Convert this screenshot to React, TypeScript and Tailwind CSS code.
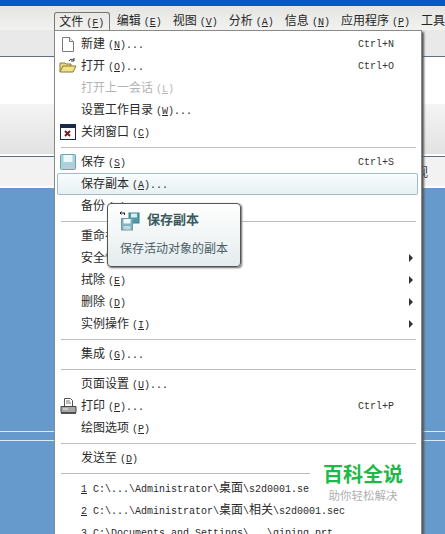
import React from 'react';

const cjk = "font-['Liberation_Mono','Noto_Sans_CJK_SC',monospace]";

const menubar = ['编辑(E)', '视图(V)', '分析(A)', '信息(N)', '应用程序(P)', '工具'];

// CJK runs at 12px, latin at 10px (half width), mnemonic letter underlined
const Txt = ({ text }: { text: string }) => (
  <>
    {text
      .split(/([\u4e00-\u9fff]+)/)
      .filter(Boolean)
      .map((part, i) => {
        if (/[\u4e00-\u9fff]/.test(part)) {
          return (
            <span key={i} className="text-[12px]">
              {part}
            </span>
          );
        }
        const m = part.match(/^\((.)\)(.*)$/);
        if (m) {
          return (
            <span key={i} className="ml-[3px] text-[10px]">
              (<span className="underline">{m[1]}</span>){m[2]}
            </span>
          );
        }
        return (
          <span key={i} className="text-[10px]">
            {part}
          </span>
        );
      })}
  </>
);

const NewIcon = () => (
  <svg width="16" height="17" viewBox="0 0 16 17">
    <path d="M2.500 1.500h7l4 4v10h-11z" fill="#fff" stroke="#7a7a7a" />
    <path d="M9.500 1.500v4h4" fill="#eee" stroke="#7a7a7a" />
  </svg>
);

const OpenIcon = () => (
  <svg width="18" height="16" viewBox="0 0 18 16">
    <path d="M1 14V5h5l1 1h5v2" fill="#e8d98a" stroke="#8a7a30" />
    <path d="M1 14l3-6h13l-3 6z" fill="#f3e28a" stroke="#8a7a30" />
    <path d="M10 3c1-2 3-2 5-1M15 0v3h-3" fill="none" stroke="#333" />
  </svg>
);

const CloseIcon = () => (
  <svg width="16" height="16" viewBox="0 0 16 16">
    <rect x="0.500" y="0.500" width="15" height="15" fill="#fff" stroke="#1c2a4a" />
    <rect x="1" y="1" width="14" height="3" fill="#1c2a4a" />
    <path d="M5 7l5 5M10 7l-5 5" stroke="#7a1c28" strokeWidth="2" />
  </svg>
);

const SaveIcon = () => (
  <svg width="16" height="16" viewBox="0 0 16 16">
    <rect x="0.500" y="0.500" width="15" height="15" rx="1" fill="#a5d3dc" stroke="#6ea4b2" />
    <rect x="3.500" y="1" width="9" height="7" fill="#eef8fa" />
    <rect x="3" y="11" width="10" height="4" fill="#b9cdd2" />
  </svg>
);

const PrintIcon = () => (
  <svg width="17" height="18" viewBox="0 0 17 18">
    <path d="M4.500 1.500h6l2 2v6h-8z" fill="#fff" stroke="#555" />
    <path d="M6 4h4M6 6h5" stroke="#777" />
    <path d="M1 9.500h15v6H1z" fill="#a8a8a8" stroke="#444" />
    <path d="M3 12h5" stroke="#eee" />
    <path d="M1 15.500h15V17H1z" fill="#555" />
  </svg>
);

const SaveCopyIcon = () => (
  <svg width="20" height="20" viewBox="0 0 20 20">
    <path d="M0 2h5M1.500 0.500L0 2l1.500 1.500M4.500 2v2" fill="none" stroke="#222" />
    <rect x="9" y="2" width="10" height="10" fill="#4f9aa8" stroke="#3f7f8c" />
    <rect x="11" y="2.500" width="6" height="4" fill="#d8eef2" />
    <rect x="1.500" y="7.500" width="11" height="11.500" fill="#7fb4c0" stroke="#6a9aa8" />
    <rect x="3.500" y="8" width="7" height="4.500" fill="#eef8fa" />
    <rect x="3.500" y="15" width="7" height="3.500" fill="#c8d8dc" />
  </svg>
);

type Item = {
  label?: string;
  num?: string;
  key?: string;
  icon?: React.ReactNode;
  muted?: boolean;
  hot?: boolean;
  arrow?: boolean;
  sep?: boolean;
};

const items: Item[] = [
  { label: '新建(N)...', key: 'Ctrl+N', icon: <NewIcon /> },
  { label: '打开(O)...', key: 'Ctrl+O', icon: <OpenIcon /> },
  { label: '打开上一会话(L)', muted: true },
  { label: '设置工作目录(W)...' },
  { label: '关闭窗口(C)', icon: <CloseIcon /> },
  { sep: true },
  { label: '保存(S)', key: 'Ctrl+S', icon: <SaveIcon /> },
  { label: '保存副本(A)...', hot: true },
  { label: '备份(B)' },
  { sep: true },
  { label: '重命名(R)' },
  { label: '安全性(Y)', arrow: true },
  { label: '拭除(E)', arrow: true },
  { label: '删除(D)', arrow: true },
  { label: '实例操作(I)', arrow: true },
  { sep: true },
  { label: '集成(G)...' },
  { sep: true },
  { label: '页面设置(U)...' },
  { label: '打印(P)...', key: 'Ctrl+P', icon: <PrintIcon /> },
  { label: '绘图选项(P)' },
  { sep: true },
  { label: '发送至(D)' },
  { sep: true },
  { num: '1', label: ' C:\\...\\Administrator\\桌面\\s2d0001.se' },
  { num: '2', label: ' C:\\...\\Administrator\\桌面\\相关\\s2d0001.sec' },
  { num: '3', label: ' C:\\Documents and Settings\\...\\qiping.prt' },
];

const Row = ({ item }: { item: Item }) => {
  if (item.sep) return <div className="my-[3.500px] ml-[6px] mr-[5px] h-px bg-[#bdbdbd]" />;
  return (
    <div
      className={`flex h-[22px] items-center pr-[8px] ${
        item.hot ? 'ml-[2px] mr-[3px] rounded-[2px] border border-[#9dbcc6] bg-gradient-to-b from-[#f8fdfe] to-[#e8f0f2]' : ''
      }`}
    >
      <span className={`flex shrink-0 items-center justify-center ${item.hot ? 'w-[23px]' : 'w-[26px]'}`}>{item.icon}</span>
      <span className={`whitespace-pre ${item.muted ? 'text-[#b4b4b4]' : 'text-[#2a2a2a]'}`}>
        {item.num && <span className="text-[10px] underline">{item.num}</span>}
        <Txt text={item.label ?? ''} />
      </span>
      {item.key && <span className="ml-auto mr-[19px] text-[10px] text-[#333]">{item.key}</span>}
      {item.arrow && (
        <span className="ml-auto h-0 w-0 border-y-[4px] border-l-[4px] border-y-transparent border-l-[#333]" />
      )}
    </div>
  );
};

export default function App() {
  return (
    <div className={`relative h-[534px] w-[445px] overflow-hidden bg-[#6699cc] ${cjk}`}>
      {/* window chrome behind the menu */}
      <div className="h-[6px] bg-[#0a56c8]" />
      <div className="flex h-[24px] items-end bg-gradient-to-b from-[#e4e4e2] to-[#f2f2f0] text-[#262626]">
        <div className="ml-[54px] flex h-[18px] w-[56px] items-center justify-center whitespace-nowrap rounded-t-[3px] border border-b-0 border-[#777]">
          <span>
            <Txt text="文件(F)" />
          </span>
        </div>
        <div className="ml-[7px] flex h-[18px] items-center gap-[11px] whitespace-nowrap">
          {menubar.map((m) => (
            <span key={m}>
              <Txt text={m} />
            </span>
          ))}
        </div>
      </div>
      <div className="h-[27px] border-b border-[#5f6f7f] bg-[#e9e9e9]" />
      <div className="h-[47px] bg-white" />
      <div className="h-[50px] bg-gradient-to-b from-[#f4f4f4] to-[#e2e2e2]" />
      <div className="h-[2px] bg-white" />
      <div className="h-[30px] border-t border-[#5f6f7f] bg-[#f2f2f2] pl-[416px] text-[12px] leading-[34px] text-[#333]">视</div>
      <div className="h-[2px] bg-white" />
      <div className="mt-[243px] h-px bg-[#dfeaf5]" />
      <div className="mt-[8px] h-px bg-[#dfeaf5]" />

      {/* menu drop-down */}
      <div className="absolute left-[54px] top-[30px] h-[510px] w-[368px] border border-[#8a8a8a] bg-white pt-[2px] shadow-[2px_2px_2px_#555]">
        {items.map((item, i) => (
          <Row key={i} item={item} />
        ))}
      </div>

      {/* tooltip */}
      <div className="absolute left-[107px] top-[203px] h-[64px] w-[134px] rounded-[4px] border border-[#555] bg-gradient-to-b from-white to-[#e4eced] shadow-[1px_1px_2px_#666]">
        <div className="flex h-[33px] items-center pl-[12px]">
          <SaveCopyIcon />
          <span className="ml-[7px] text-[13px] font-bold text-[#3b5a60]">保存副本</span>
        </div>
        <div className="mt-[4px] pl-[12px] text-[12px] text-[#4a6066]">保存活动对象的副本</div>
      </div>

      {/* watermark */}
      <div className="absolute left-[310px] top-[462px] flex h-[44px] w-[106px] flex-col items-center bg-white pt-[5px]">
        <span className="text-[20px] font-bold leading-[20px] text-[#1fb84a]">百科全说</span>
        <span className="mt-[1px] text-[11.500px] leading-[18px] text-[#b0b0b0]">助你轻松解决</span>
      </div>
    </div>
  );
}
